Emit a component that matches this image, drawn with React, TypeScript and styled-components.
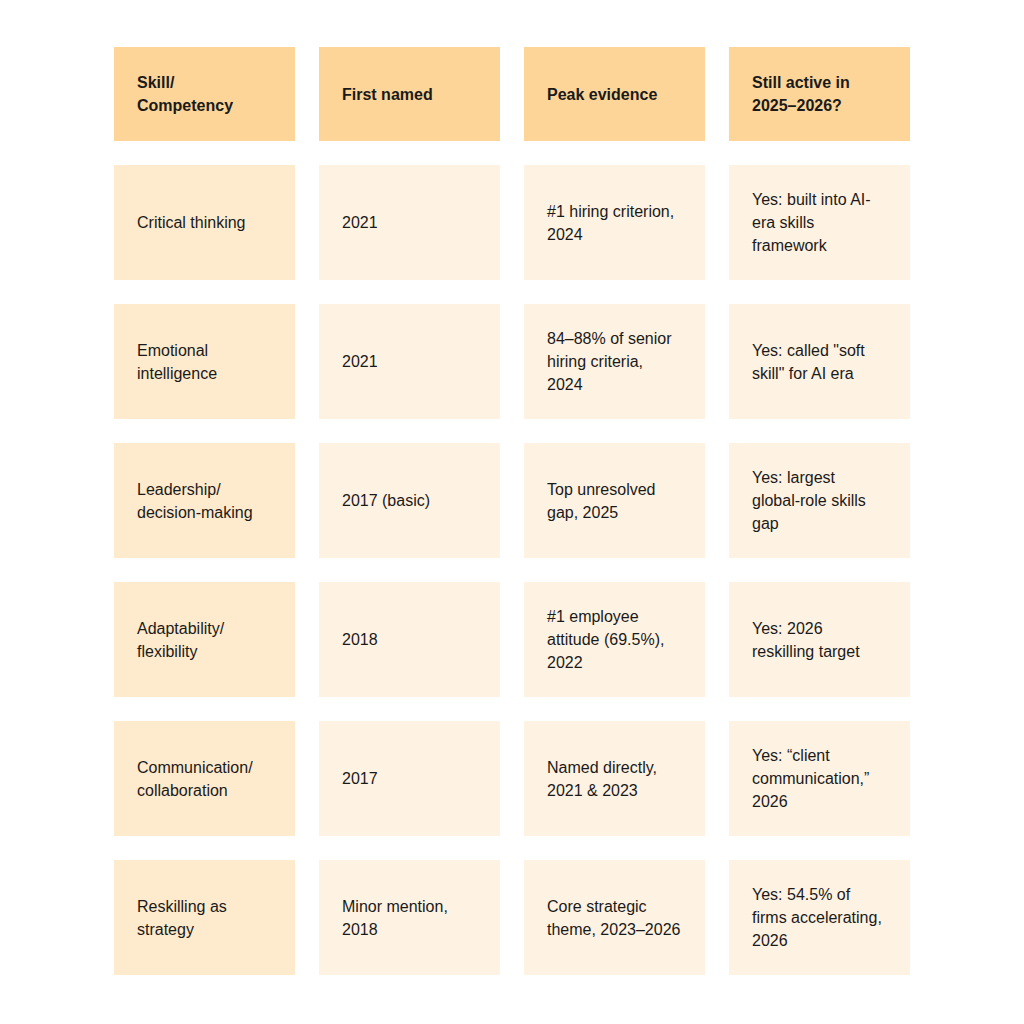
import React from "react"
import styled, { createGlobalStyle } from "styled-components"

type Tone = "head" | "key" | "body"

const GlobalStyle = createGlobalStyle`
  html, body {
    margin: 0;
    padding: 0;
    background: #ffffff;
  }
  body {
    font-family: "Liberation Sans", Arial, sans-serif;
    color: #1a1a1a;
  }
`

const Page = styled.div`
  width: 1024px;
  min-height: 1024px;
  box-sizing: border-box;
  padding: 47px 0 0 114px;
`

const Grid = styled.div`
  display: grid;
  grid-template-columns: repeat(4, 181px);
  grid-template-rows: 94px repeat(6, 115px);
  column-gap: 24px;
  row-gap: 24px;
`

const toneColor: Record<Tone, string> = {
  head: "#fdd598",
  key: "#feeacc",
  body: "#fef2e2",
}

const Cell = styled.div<{ $tone: Tone }>`
  display: flex;
  align-items: center;
  box-sizing: border-box;
  padding: 0 22px 0 23px;
  background: ${(p) => toneColor[p.$tone]};
  font-size: 16px;
  line-height: 23px;
  font-weight: ${(p) => (p.$tone === "head" ? 700 : 400)};
  white-space: pre-line;
`

const headers = ["Skill/\nCompetency", "First named", "Peak evidence", "Still active in 2025–2026?"]

// explicit newlines where the source breaks lines differently from the natural wrap
const rows: string[][] = [
  ["Critical thinking", "2021", "#1 hiring criterion, 2024", "Yes: built into AI-era skills framework"],
  ["Emotional intelligence", "2021", "84–88% of senior hiring criteria, 2024", 'Yes: called "soft skill" for AI era'],
  ["Leadership/\ndecision-making", "2017 (basic)", "Top unresolved gap, 2025", "Yes: largest\nglobal-role skills\ngap"],
  ["Adaptability/\nflexibility", "2018", "#1 employee attitude (69.5%), 2022", "Yes: 2026 reskilling target"],
  ["Communication/\ncollaboration", "2017", "Named directly, 2021 & 2023", "Yes: “client communication,” 2026"],
  ["Reskilling as strategy", "Minor mention, 2018", "Core strategic theme, 2023–2026", "Yes: 54.5% of firms accelerating, 2026"],
]

const App: React.FC = () => {
  return (
    <>
      <GlobalStyle />
      <Page>
        <Grid>
          {headers.map((h) => (
            <Cell key={h} $tone="head">
              {h}
            </Cell>
          ))}
          {rows.map((row, i) =>
            row.map((text, j) => (
              <Cell key={`${i}-${j}`} $tone={j === 0 ? "key" : "body"}>
                {text}
              </Cell>
            ))
          )}
        </Grid>
      </Page>
    </>
  )
}

export default App
